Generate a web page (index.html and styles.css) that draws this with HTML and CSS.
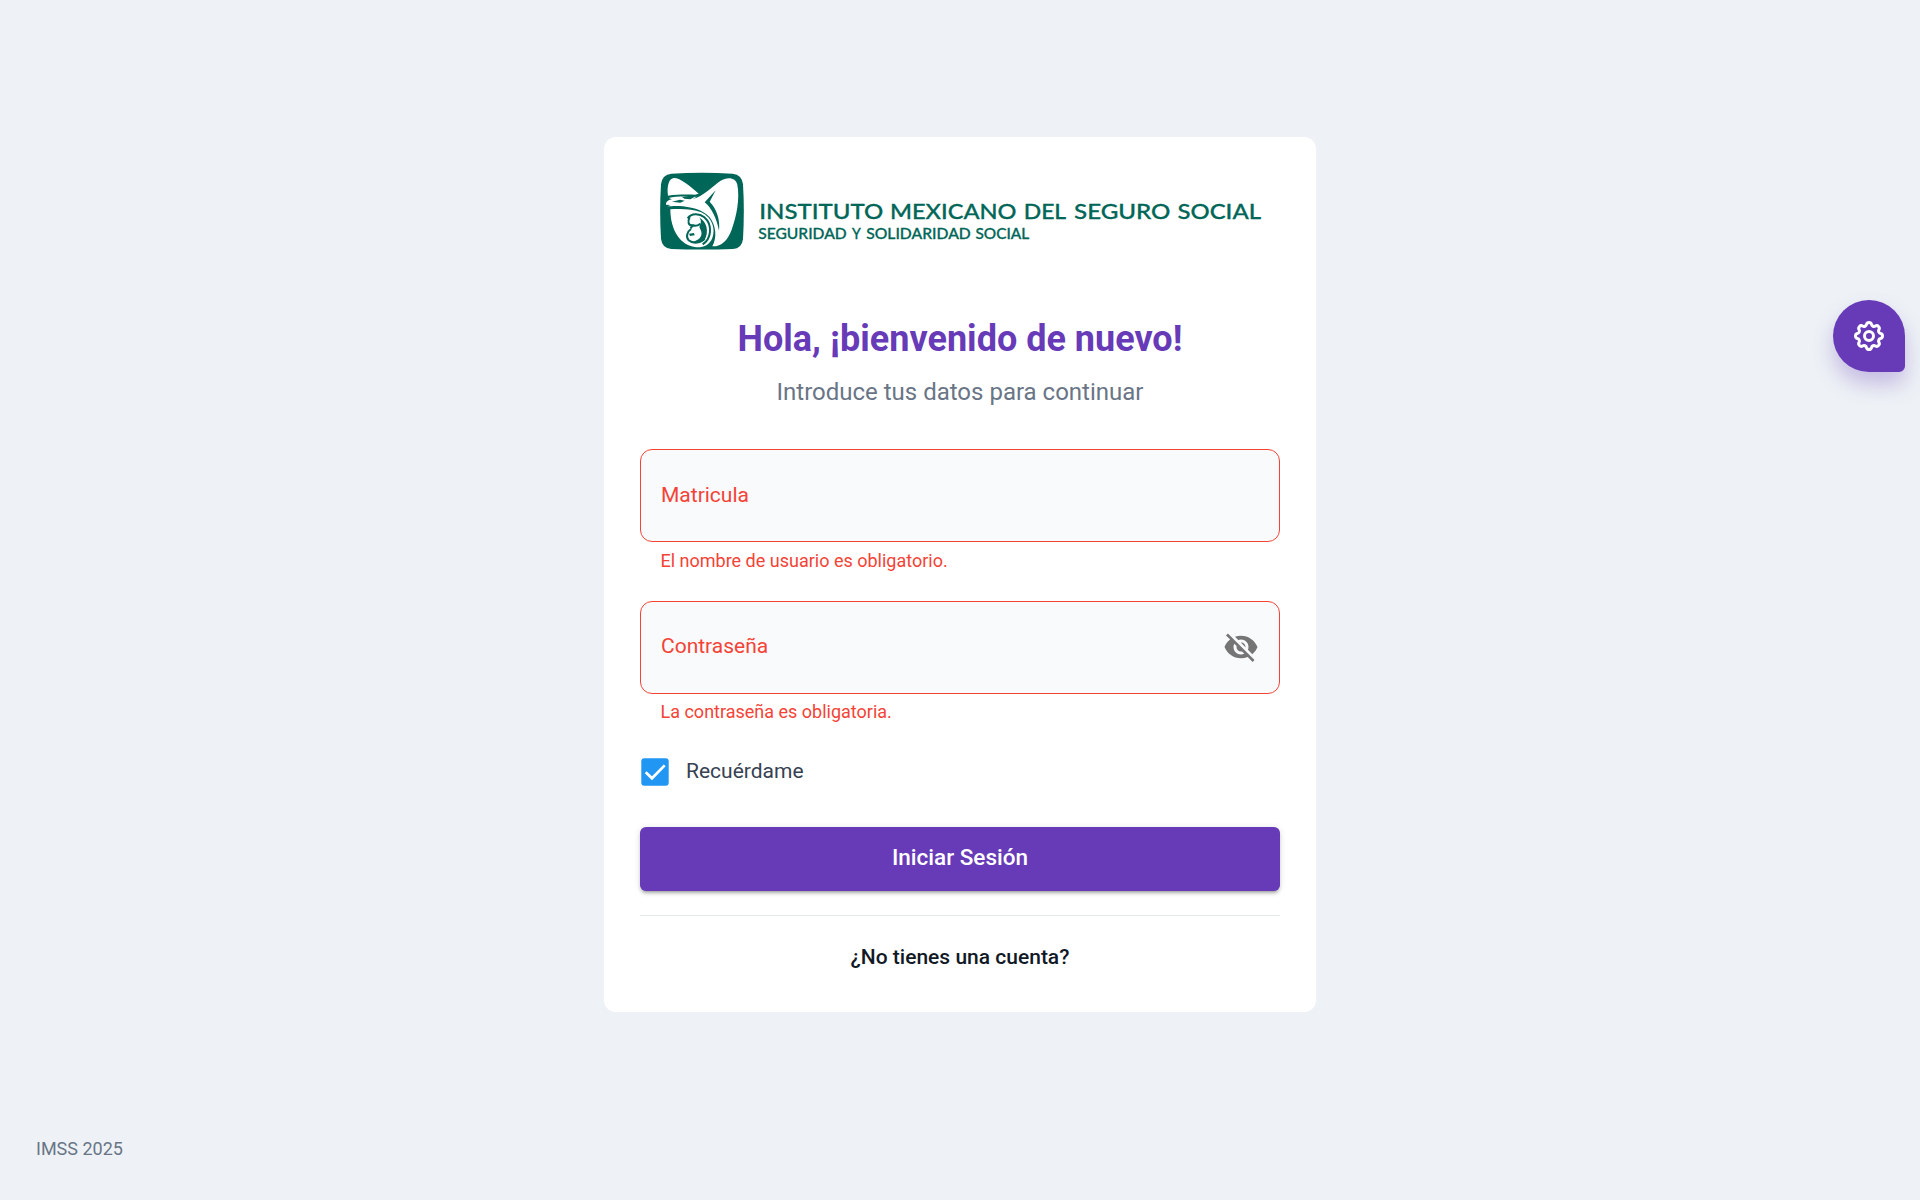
FILE: index.html
```html
<!DOCTYPE html>
<html lang="es">
<head>
<meta charset="utf-8">
<title>IMSS</title>
<link rel="stylesheet" href="styles.css">
</head>
<body>
<main class="page">
  <section class="card">
    <svg class="logo" viewBox="0 0 602 78" width="602" height="78">
      <g transform="scale(.33333) translate(-27 -21)">
        <path fill="#006657" d="M64 26Q155 20 248 26Q276 29 279 58Q284 138 279 222Q276 250 249 252Q155 255 64 252Q36 249 33 221Q28 138 33 58Q36 29 64 26Z"/>
        <path fill="#fff" d="M54 92C50 62 57 40 72 39C91 39 120 63 146 86L136 89C111 88 80 88 54 92Z"/>
        <path fill="#fff" d="M48 119C47 111 54 105 66 103L56 99C77 93 110 95 140 95L128 102C162 94 189 62 211 48C234 34 257 38 262 59C270 101 260 151 245 194C233 227 214 245 187 244C202 219 198 181 179 157C158 132 119 125 87 123C72 122 62 124 52 124L62 120Z"/>
        <path fill="#fff" d="M61 133C90 131 127 131 154 142C187 158 197 192 187 219C178 241 160 248 139 247C91 243 61 196 61 133Z"/>
        <path fill="#006657" d="M66 110L90 104L104 107L91 113ZM96 96L148 88L121 103L103 101ZM197 76L164 112C185 129 200 160 207 197C211 166 201 133 179 110Z"/>
        <path fill="none" stroke="#006657" stroke-width="6" d="M113 160C124 144 148 145 163 157C190 181 183 222 158 238"/>
        <path fill="none" stroke="#006657" stroke-width="6" d="M119 156C112 171 115 182 128 181L122 190M128 181C136 184 146 180 151 176M123 192C111 200 107 217 116 226C130 238 154 234 164 220"/>
        <path fill="#006657" d="M147 157C171 170 178 202 163 226C153 235 136 235 126 230C148 226 157 214 154 200C151 190 145 187 151 178C154 170 153 163 147 157ZM117 206L132 204L134 211L120 213Z"/>
      </g>
      <g class="logo-text">
        <g font-size="21">
          <text x="100.3" y="46.5" textLength="124" lengthAdjust="spacingAndGlyphs">INSTITUTO</text>
          <text x="231" y="46.5" textLength="126.5" lengthAdjust="spacingAndGlyphs">MEXICANO</text>
          <text x="364.7" y="46.5" textLength="42.5" lengthAdjust="spacingAndGlyphs">DEL</text>
          <text x="415" y="46.5" textLength="96.5" lengthAdjust="spacingAndGlyphs">SEGURO</text>
          <text x="518.5" y="46.5" textLength="83.5" lengthAdjust="spacingAndGlyphs">SOCIAL</text>
        </g>
        <g font-size="14.3">
          <text x="99.2" y="67.2" textLength="88.5" lengthAdjust="spacingAndGlyphs">SEGURIDAD</text>
          <text x="193" y="67.2" textLength="8.8" lengthAdjust="spacingAndGlyphs">Y</text>
          <text x="207.2" y="67.2" textLength="104.6" lengthAdjust="spacingAndGlyphs">SOLIDARIDAD</text>
          <text x="316.5" y="67.2" textLength="53.7" lengthAdjust="spacingAndGlyphs">SOCIAL</text>
        </g>
      </g>
    </svg>
    <h1 class="title">Hola, ¡bienvenido de nuevo!</h1>
    <p class="subtitle">Introduce tus datos para continuar</p>
    <form class="form">
      <div class="field"><label>Matricula</label></div>
      <p class="error">El nombre de usuario es obligatorio.</p>
      <div class="field password"><label>Contraseña</label>
        <svg class="eye" viewBox="0 0 24 24" width="36" height="36"><path fill="#757575" d="M12 7c2.76 0 5 2.24 5 5 0 .65-.13 1.26-.36 1.83l2.92 2.92c1.51-1.26 2.7-2.89 3.43-4.75-1.73-4.39-6-7.5-11-7.5-1.4 0-2.74.25-3.98.7l2.16 2.16C10.74 7.13 11.35 7 12 7zM2 4.27l2.28 2.28.46.46C3.08 8.3 1.78 10.02 1 12c1.73 4.39 6 7.5 11 7.5 1.55 0 3.03-.3 4.38-.84l.42.42L19.73 22 21 20.73 3.27 3 2 4.27zM7.53 9.8l1.55 1.55c-.05.21-.08.43-.08.65 0 1.66 1.34 3 3 3 .22 0 .44-.03.65-.08l1.55 1.55c-.67.33-1.41.53-2.2.53-2.76 0-5-2.24-5-5 0-.79.2-1.53.53-2.2zm4.31-.78 3.15 3.15.02-.16c0-1.66-1.34-3-3-3l-.17.01z"/></svg>
      </div>
      <p class="error last">La contraseña es obligatoria.</p>
      <div class="remember">
        <svg class="check" viewBox="0 0 28 28" width="28" height="28"><rect x=".3" y=".3" width="27.4" height="27.4" rx="3" fill="#2196f3"/><path d="M4.7 14.2L11 20.3L23.7 7.4" fill="none" stroke="#fff" stroke-width="2.7"/></svg>
        <span>Recuérdame</span>
      </div>
      <button class="submit" type="button">Iniciar Sesión</button>
    </form>
    <hr class="divider">
    <a class="signup">¿No tienes una cuenta?</a>
  </section>
</main>
<footer class="footer">IMSS 2025</footer>
<div class="fab">
  <svg viewBox="0 0 24 24" width="36" height="36" fill="none" stroke="#fff" stroke-width="2" stroke-linecap="round" stroke-linejoin="round"><path d="M10.325 4.317c.426-1.756 2.924-1.756 3.35 0a1.724 1.724 0 0 0 2.573 1.066c1.543-.94 3.31.826 2.37 2.37a1.724 1.724 0 0 0 1.065 2.572c1.756.426 1.756 2.924 0 3.35a1.724 1.724 0 0 0-1.066 2.573c.94 1.543-.826 3.31-2.37 2.37a1.724 1.724 0 0 0-2.572 1.065c-.426 1.756-2.924 1.756-3.35 0a1.724 1.724 0 0 0-2.573-1.066c-1.543.94-3.31-.826-2.37-2.37a1.724 1.724 0 0 0-1.065-2.572c-1.756-.426-1.756-2.924 0-3.35a1.724 1.724 0 0 0 1.066-2.573c-.94-1.543.826-3.31 2.37-2.37 1 .608 2.296.07 2.572-1.065z"/><circle cx="12" cy="12" r="3"/></svg>
</div>
</body>
</html>
```
FILE: styles.css
```css
* { box-sizing: border-box; }
body {
  margin: 0;
  height: 1200px;
  display: flex;
  flex-direction: column;
  overflow: hidden;
  background: #eef2f6;
  font-family: Roboto, sans-serif;
}
.page {
  flex: 1;
  display: flex;
  flex-direction: column;
  align-items: center;
  padding-top: 137px;
}
.card {
  width: 712px;
  height: 875px;
  padding: 35px 36px 0;
  border-radius: 12px;
  background: #fff;
  display: flex;
  flex-direction: column;
}
.logo { margin-left: 19px; overflow: visible; flex: none; }
.logo-text {
  font-family: Lato, sans-serif;
  font-weight: 500;
  fill: #006657;
  stroke: #006657;
  stroke-width: .3px;
}
.title {
  margin: 68px 0 0;
  font-size: 36px;
  line-height: 43px;
  font-weight: 700;
  text-align: center;
  color: #673ab7;
}
.subtitle {
  margin: 11px 0 0;
  font-size: 24px;
  line-height: 40px;
  text-align: center;
  color: #697586;
}
.form { margin-top: 37px; }
.field {
  height: 93px;
  padding: 0 20px 2px;
  border: 1px solid #f44336;
  border-radius: 12px;
  background: #f8fafc;
  display: flex;
  align-items: center;
  justify-content: space-between;
  font-size: 21px;
  color: #f44336;
}
.password label { padding-bottom: 2px; }
.error {
  height: 30px;
  margin: 4px 0 25px 20.5px;
  font-size: 18px;
  line-height: 30px;
  color: #f44336;
}
.error.last { margin: 3px 0 0 20.5px; }
.remember {
  height: 28px;
  margin: 31px 0 41px 1px;
  display: flex;
  align-items: center;
  gap: 17px;
  font-size: 21px;
  color: #364152;
}
.remember span { padding-bottom: 2px; }
.submit {
  display: block;
  width: 100%;
  height: 64px;
  padding: 0 0 4px;
  border: 0;
  border-radius: 6px;
  background: #673ab7;
  box-shadow: 0 4px 2px -3px rgba(0,0,0,.2), 0 3px 3px rgba(0,0,0,.14), 0 1px 7px rgba(0,0,0,.12);
  font: 500 22.5px Roboto, sans-serif;
  color: #fff;
}
.divider {
  width: 100%;
  height: 1px;
  margin: 24px 0 0;
  border: 0;
  background: #e3e8ef;
}
.signup {
  margin-top: 25px;
  text-align: center;
  font-size: 21px;
  line-height: 32px;
  font-weight: 500;
  color: #121926;
}
.footer {
  height: 66px;
  padding-left: 36px;
  font-size: 18px;
  line-height: 30px;
  color: #697586;
}
.fab {
  position: absolute;
  left: 1833px;
  top: 300px;
  width: 72px;
  height: 72px;
  border-radius: 50% 50% 6px 50%;
  background: #673ab7;
  box-shadow: 0 12px 21px rgba(103,58,183,.3);
  display: flex;
  align-items: center;
  justify-content: center;
}
```
